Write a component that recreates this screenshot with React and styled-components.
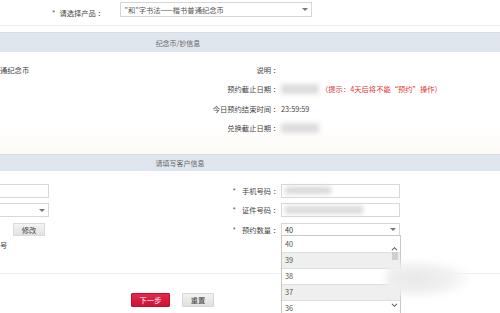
import React from "react"
import styled, { createGlobalStyle } from "styled-components"

const Global = createGlobalStyle`
  html, body {
    margin: 0;
    padding: 0;
    background: #fff;
  }
  body {
    font-family: "Noto Sans CJK SC", "Liberation Sans", sans-serif;
    font-size: 7.3px;
    color: #444;
  }
`

const Page = styled.div`
  position: relative;
  width: 500px;
  height: 313px;
  overflow: hidden;
  background: #fff;
`

const TopRow = styled.div`
  display: flex;
  align-items: center;
  height: 26px;
  padding-left: 52px;
  border-bottom: 1px solid #eeeeee;
  box-sizing: border-box;
`

const Star = styled.span`
  color: #555;
  margin-right: ${(p) => p.$gap || 6}px;
`

const TopLabel = styled.span`
  width: 61px;
  white-space: nowrap;
`

const ProductSelect = styled.div`
  display: flex;
  align-items: center;
  justify-content: space-between;
  width: 192px;
  height: 15px;
  margin-top: -6px;
  padding: 0 3px;
  box-sizing: border-box;
  border: 1px solid #d6d6d6;
  color: #555;
`

const Arrow = styled.span`
  width: 0;
  height: 0;
  border-left: 3px solid transparent;
  border-right: 3px solid transparent;
  border-top: 3px solid #777;
`

const Band = styled.div`
  height: ${(p) => p.$h}px;
  margin-top: ${(p) => p.$top || 0}px;
  display: flex;
  align-items: center;
  justify-content: center;
  padding-right: ${(p) => p.$shift}px;
  background: #dfe6ee;
  border-top: 1px solid #d4dce6;
  box-sizing: border-box;
  color: #666;
  font-size: 7px;
`

const InfoSection = styled.div`
  height: 102px;
  padding-top: 8px;
  box-sizing: border-box;
  background: linear-gradient(#ffffff 70%, #fdfaf5);
`

const Row = styled.div`
  display: grid;
  grid-template-columns: 208px 72px 1fr;
  align-items: center;
  height: ${(p) => p.$h || 19.5}px;
`

const LeftCell = styled.div`
  margin-left: ${(p) => p.$shift || 0}px;
  white-space: nowrap;
`

const Label = styled.div`
  text-align: right;
  white-space: nowrap;
  color: #444;
`

const Value = styled.div`
  display: flex;
  align-items: center;
  padding-left: 1px;
  white-space: nowrap;
`

const Blur = styled.span`
  display: inline-block;
  width: ${(p) => p.$w}px;
  height: ${(p) => p.$h || 8}px;
  background: ${(p) => p.$c || "#dcdcdc"};
  filter: blur(2.5px);
`

const Hint = styled.span`
  color: #e2353c;
  margin-left: 2px;
`

const CustomerSection = styled.div`
  height: 103px;
  padding-top: 10px;
  box-sizing: border-box;
  border-bottom: 1px solid #f0f0f0;
`

const Field = styled.div`
  display: flex;
  align-items: center;
  justify-content: space-between;
  width: ${(p) => p.$w}px;
  height: ${(p) => p.$h || 14}px;
  padding: 0 3px;
  box-sizing: border-box;
  border: 1px solid #d8d8d8;
  background: #fff;
  color: #333;
`

const SmallButton = styled.div`
  width: 32px;
  height: 13px;
  margin-left: 73px;
  display: flex;
  align-items: center;
  justify-content: center;
  background: linear-gradient(#f4f4f4, #e2e2e2);
  border: 1px solid #dadada;
  box-sizing: border-box;
  color: #444;
`

const CellWrap = styled.div`
  position: relative;
`

const DropList = styled.div`
  position: absolute;
  top: 12px;
  left: 0;
  width: 118px;
  border: 1px solid #c8c8c8;
  background: #fff;
  z-index: 2;
`

const Option = styled.div`
  height: 16px;
  display: flex;
  align-items: center;
  padding-left: 3px;
  box-sizing: border-box;
  border-top: ${(p) => (p.$first ? "none" : "1px solid #dedede")};
  background: ${(p) => (p.$alt ? "#efefef" : "#fff")};
  color: #555555;
`

const ScrollBar = styled.div`
  position: absolute;
  top: 8px;
  right: 1px;
  bottom: 0;
  width: 9px;
  display: flex;
  flex-direction: column;
  align-items: center;
`

const Thumb = styled.div`
  width: 6px;
  height: 8px;
  margin-top: 1px;
  background: #cfcfcf;
`

const Chevron = styled.svg`
  width: 7px;
  height: 5px;
  margin-top: ${(p) => p.$mt || 0}px;
`

const Buttons = styled.div`
  display: flex;
  gap: 12px;
  padding: 19px 0 0 131px;
`

const Btn = styled.div`
  width: ${(p) => p.$w}px;
  height: 14px;
  display: flex;
  align-items: center;
  justify-content: center;
  box-sizing: border-box;
  background: ${(p) =>
    p.$primary ? "linear-gradient(#e2294b, #cc1236)" : "linear-gradient(#f2f2f2, #e0e0e0)"};
  border: 1px solid ${(p) => (p.$primary ? "#c2102f" : "#d6d6d6")};
  border-radius: 1px;
  color: ${(p) => (p.$primary ? "#fff" : "#444")};
`

const Watermark = styled.div`
  position: absolute;
  left: 386px;
  top: 260px;
  width: 84px;
  height: 38px;
  background: radial-gradient(ellipse at 35% 50%, #e8e8e8 0%, #f0f0f0 45%, rgba(255, 255, 255, 0) 75%);
  filter: blur(3px);
  z-index: 3;
`

const options = ["40", "39", "38", "37", "36"]

function Select({ w, children }) {
  return (
    <Field $w={w}>
      <span>{children}</span>
      <Arrow />
    </Field>
  )
}

export default function App() {
  return (
    <Page>
      <Global />
      <TopRow>
        <Star $gap={4}>*</Star>
        <TopLabel>请选择产品 ：</TopLabel>
        <ProductSelect>
          <span>"和"字书法——楷书普通纪念币</span>
          <Arrow />
        </ProductSelect>
      </TopRow>

      <Band $h={20} $top={6} $shift={144}>
        纪念币/钞信息
      </Band>

      <InfoSection>
        <Row>
          <LeftCell>通纪念币</LeftCell>
          <Label>说明 ：</Label>
          <Value />
        </Row>
        <Row>
          <div />
          <Label>预约截止日期 ：</Label>
          <Value>
            <Blur $w={38} $h={10} />
            <Hint>（提示：4天后将不能“预约”操作）</Hint>
          </Value>
        </Row>
        <Row>
          <div />
          <Label>今日预约结束时间 ：</Label>
          <Value>23:59:59</Value>
        </Row>
        <Row>
          <div />
          <Label>兑换截止日期 ：</Label>
          <Value>
            <Blur $w={38} $h={10} />
          </Value>
        </Row>
      </InfoSection>

      <Band $h={17} $shift={140}>
        请填写客户信息
      </Band>

      <CustomerSection>
        <Row>
          <LeftCell $shift={-60}>
            <Field $w={109} />
          </LeftCell>
          <Label>
            <Star>*</Star>手机号码 ：
          </Label>
          <Value>
            <Field $w={119}>
              <Blur $w={46} $h={7} $c="#d6d6d6" />
            </Field>
          </Value>
        </Row>
        <Row>
          <LeftCell $shift={-60}>
            <Select w={109} />
          </LeftCell>
          <Label>
            <Star>*</Star>证件号码 ：
          </Label>
          <Value>
            <Field $w={119}>
              <Blur $w={78} $h={8} $c="#d9d9d9" />
            </Field>
          </Value>
        </Row>
        <Row>
          <LeftCell $shift={-60}>
            <SmallButton>修改</SmallButton>
          </LeftCell>
          <Label>
            <Star>*</Star>预约数量 ：
          </Label>
          <Value>
            <CellWrap>
              <Select w={119}>40</Select>
              <DropList>
                {options.map((o, i) => (
                  <Option key={o} $first={i === 0} $alt={i % 2 === 1}>
                    {o}
                  </Option>
                ))}
                <ScrollBar>
                  <Chevron viewBox="0 0 8 5" $mt={2}>
                    <path d="M1 4.5 L4 1.5 L7 4.5" fill="none" stroke="#555" strokeWidth="1.2" />
                  </Chevron>
                  <Thumb />
                  <Chevron viewBox="0 0 8 5" $mt={43}>
                    <path d="M1 0.5 L4 3.5 L7 0.5" fill="none" stroke="#555" strokeWidth="1.2" />
                  </Chevron>
                </ScrollBar>
              </DropList>
            </CellWrap>
          </Value>
        </Row>
        <Row $h={8}>
          <LeftCell>号</LeftCell>
        </Row>
      </CustomerSection>

      <Buttons>
        <Btn $primary $w={39}>下一步</Btn>
        <Btn $w={32}>重置</Btn>
      </Buttons>

      <Watermark />
    </Page>
  )
}
